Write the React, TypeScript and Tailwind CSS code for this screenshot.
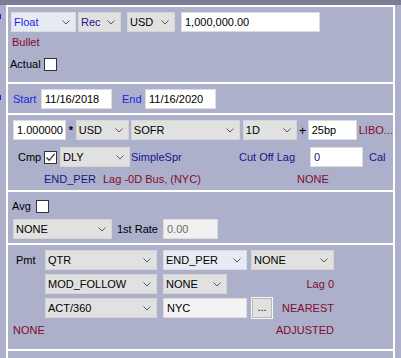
import React from "react";

function Chevron() {
  return (
    <svg width="8" height="5" viewBox="0 0 8 5" className="shrink-0">
      <path d="M0.5 0.5 L4 4 L7.5 0.5" stroke="#5a5a5a" strokeWidth="1" fill="none" />
    </svg>
  );
}

function Sel({
  w,
  text,
  bg = "bg-[#e1e1e1] border-[#d6d6d6]",
  tc = "text-black",
}: {
  w: string;
  text: string;
  bg?: string;
  tc?: string;
}) {
  return (
    <div className={`${w} ${bg} h-[20px] border flex items-center justify-between pl-[2px] pr-[5px] shrink-0`}>
      <span className={`${tc} whitespace-nowrap`}>{text}</span>
      <Chevron />
    </div>
  );
}

function Inp({
  w,
  text,
  bg = "bg-white",
  tc = "text-black",
}: {
  w: string;
  text: string;
  bg?: string;
  tc?: string;
}) {
  return (
    <div className={`${w} ${bg} h-[20px] border border-[#dcdcdc] flex items-center pl-[3px] shrink-0`}>
      <span className={`${tc} whitespace-nowrap`}>{text}</span>
    </div>
  );
}

function Check({ checked = false }: { checked?: boolean }) {
  return (
    <div className="w-[13px] h-[13px] bg-white border border-[#333333] flex items-center justify-center shrink-0">
      {checked && (
        <svg width="11" height="11" viewBox="0 0 11 11">
          <path d="M1.5 5.5 L4.2 8.3 L9.5 1.8" stroke="#333333" strokeWidth="1.3" fill="none" />
        </svg>
      )}
    </div>
  );
}

export default function App() {
  const red = "text-[#820c2c]";
  const navy = "text-[#16168a]";
  const blue = "text-[#1e1ee6]";
  return (
    <div className="w-[401px] h-[358px] overflow-hidden bg-[#acb0ca] flex flex-col text-[11px] leading-[13px] font-['Liberation_Sans',Arial,sans-serif] text-black">
      <div className="h-[5px] bg-[#7b7e96] shrink-0" />
      <div className="flex flex-1 min-h-0">
        {/* left gutter */}
        <div className="w-[6px] shrink-0 flex flex-col">
          <div className="mt-[9px] w-[1px] h-[5px] bg-[#2020d0]" />
          <div className="mt-[76px] w-[1px] h-[5px] bg-[#2020d0]" />
        </div>
        {/* panel */}
        <div className="w-[389px] shrink-0 border-l-2 border-r-2 border-t-2 border-white flex flex-col">
          {/* Section 1 */}
          <div className="h-[75px] pt-[5px] pl-[3px] flex flex-col shrink-0">
            <div className="flex items-center">
              <Sel w="w-[65px]" text="Float" bg="bg-[#e6ebf3] border-[#d8dde8]" tc={blue} />
              <div className="ml-[2px]">
                <Sel w="w-[43px]" text="Rec" tc={navy} />
              </div>
              <div className="ml-[6px]">
                <Sel w="w-[48px]" text="USD" />
              </div>
              <div className="ml-[6px]">
                <Inp w="w-[139px]" text="1,000,000.00" />
              </div>
            </div>
            <div className={`mt-[4px] ml-[1px] ${red}`}>Bullet</div>
            <div className="mt-[9px] flex items-center -ml-[1px]">
              <span className="w-[34px]">Actual</span>
              <Check />
            </div>
          </div>
          <div className="h-[2px] bg-white shrink-0" />
          {/* Section 2 */}
          <div className="h-[29px] pt-[5px] pl-[5px] flex items-start shrink-0">
            <div className="flex items-center">
              <span className={`w-[28px] ${blue}`}>Start</span>
              <Inp w="w-[71px]" text="11/16/2018" />
              <span className={`ml-[10px] w-[23px] ${blue}`}>End</span>
              <Inp w="w-[71px]" text="11/16/2020" />
            </div>
          </div>
          <div className="h-[2px] bg-white shrink-0" />
          {/* Section 3 */}
          <div className="h-[75px] pt-[5px] pl-[5px] flex flex-col shrink-0">
            <div className="flex items-center">
              <Inp w="w-[53px]" text="1.000000" />
              <span className="w-[11px] text-center font-bold">*</span>
              <Sel w="w-[53px]" text="USD" />
              <div className="ml-[2px]">
                <Sel w="w-[109px]" text="SOFR" />
              </div>
              <div className="ml-[3px]">
                <Sel w="w-[54px]" text="1D" />
              </div>
              <span className="w-[12px] pl-[2px] text-[13px]">+</span>
              <Inp w="w-[49px]" text="25bp" />
              <span className={`ml-[2px] ${red} whitespace-nowrap`}>LIBO...</span>
            </div>
            <div className="mt-[7px] flex items-center h-[20px]">
              <span className="ml-[5px] w-[26px]">Cmp</span>
              <Check checked />
              <div className="ml-[3px]">
                <Sel w="w-[70px]" text="DLY" />
              </div>
              <span className={`ml-[1px] w-[108px] ${navy}`}>SimpleSpr</span>
              <span className={`w-[71px] ${navy}`}>Cut Off Lag</span>
              <Inp w="w-[53px]" text="0" tc={navy} />
              <span className={`ml-[6px] ${navy}`}>Cal</span>
            </div>
            <div className="mt-[6px] flex">
              <span className={`ml-[31px] w-[59px] shrink-0 ${navy}`}>END_PER</span>
              <span className={`w-[194px] shrink-0 ${red}`}>Lag -0D Bus, (NYC)</span>
              <span className={red}>NONE</span>
            </div>
          </div>
          <div className="h-[2px] bg-white shrink-0" />
          {/* Section 4 */}
          <div className="h-[51px] pt-[8px] flex flex-col shrink-0">
            <div className="flex items-center pl-[4px]">
              <span className="w-[24px]">Avg</span>
              <Check />
            </div>
            <div className="mt-[6px] flex items-center pl-[5px]">
              <Sel w="w-[99px]" text="NONE" />
              <span className="ml-[5px] w-[46px]">1st Rate</span>
              <Inp w="w-[55px]" text="0.00" bg="bg-[#f0f0f0]" tc="text-[#6d6d6d]" />
            </div>
          </div>
          <div className="h-[2px] bg-white shrink-0" />
          {/* Section 5 */}
          <div className="h-[104px] pt-[5px] flex flex-col shrink-0">
            <div className="grid grid-cols-[37px_112px_90px_87px] gap-y-[4px]">
              <div className="h-[20px] flex items-center pl-[8px]">Pmt</div>
              <Sel w="w-[112px]" text="QTR" />
              <div className="pl-[6px]">
                <Sel w="w-[84px]" text="END_PER" bg="bg-[#e6ebf3] border-[#d8dde8]" />
              </div>
              <div className="pl-[4px]">
                <Sel w="w-[83px]" text="NONE" />
              </div>

              <div />
              <Sel w="w-[112px]" text="MOD_FOLLOW" />
              <div className="pl-[6px]">
                <Sel w="w-[64px]" text="NONE" />
              </div>
              <div className={`h-[20px] flex items-center justify-end ${red}`}>Lag 0</div>

              <div />
              <Sel w="w-[112px]" text="ACT/360" />
              <div className="pl-[6px]">
                <Inp w="w-[84px]" text="NYC" bg="bg-[#f3f3f3]" />
              </div>
              <div className="pl-[4px] h-[20px] flex items-center justify-between">
                <div className="w-[22px] h-[22px] bg-[#e1e1e1] border border-[#f6f6f6] outline outline-1 outline-[#b8b8b8] -outline-offset-2 flex items-center justify-center">
                  <span className="leading-none -mt-[1px]">...</span>
                </div>
                <span className={red}>NEAREST</span>
              </div>
            </div>
            <div className="mt-[6px] flex w-[326px] pl-[5px] justify-between">
              <span className={red}>NONE</span>
              <span className={red}>ADJUSTED</span>
            </div>
          </div>
          <div className="h-[2px] bg-white shrink-0" />
        </div>
      </div>
    </div>
  );
}
